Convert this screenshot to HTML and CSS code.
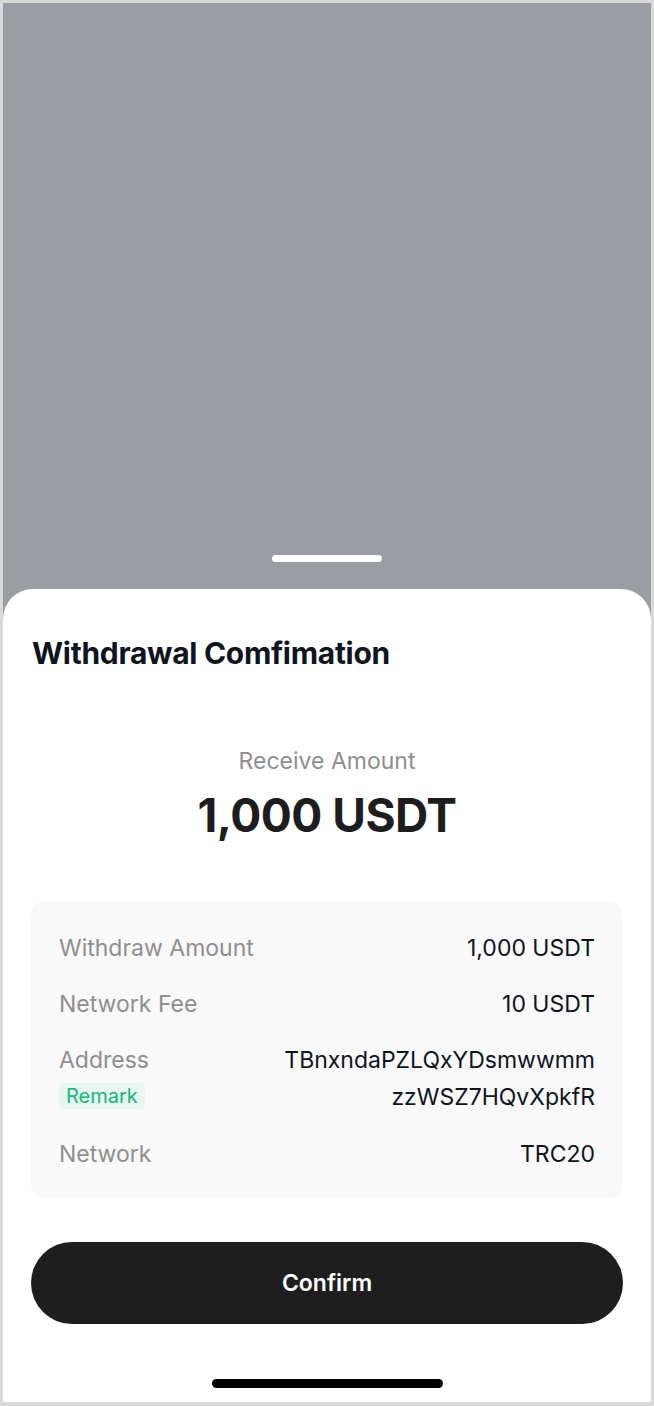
FILE: index.html
```html
<!DOCTYPE html>
<html lang="en">
<head>
    <meta charset="UTF-8">
    <meta name="viewport" content="width=device-width, initial-scale=1.0">
    <title>Withdrawal Confirmation</title>
    <link rel="stylesheet" href="styles.css">
</head>
<body>
    <div class="screen">
        <div class="overlay">
            <div class="handle"></div>
        </div>

        <div class="sheet">
            <h1 class="title">Withdrawal Comfimation</h1>

            <div class="receive">
                <p class="receive-label">Receive Amount</p>
                <p class="receive-value">1,000 USDT</p>
            </div>

            <div class="details">
                <div class="row">
                    <span class="label">Withdraw Amount</span>
                    <span class="value">1,000 USDT</span>
                </div>
                <div class="row">
                    <span class="label">Network Fee</span>
                    <span class="value">10 USDT</span>
                </div>
                <div class="row row-address">
                    <div class="address-left">
                        <span class="label">Address</span>
                        <span class="remark">Remark</span>
                    </div>
                    <span class="value address">TBnxndaPZLQxYDsmwwmm<br>zzWSZ7HQvXpkfR</span>
                </div>
                <div class="row">
                    <span class="label">Network</span>
                    <span class="value">TRC20</span>
                </div>
            </div>

            <button class="confirm">Confirm</button>

            <div class="home-indicator"></div>
        </div>
    </div>
</body>
</html>
```

FILE: styles.css
```css
* {
    box-sizing: border-box;
}
body {
    margin: 0;
    font-family: Inter, 'Noto Sans', sans-serif;
    background: #d9d9d9;
}
.screen {
    width: 654px;
    height: 1406px;
    border: 3px solid #d9d9d9;
    border-bottom-width: 4px;
    display: flex;
    flex-direction: column;
    background: #9a9da1;
}
.overlay {
    flex: 1;
    display: flex;
    align-items: flex-end;
    justify-content: center;
    padding-bottom: 27px;
}
.handle {
    width: 110px;
    height: 7px;
    border-radius: 4px;
    background: #fff;
}
.sheet {
    height: 813px;
    background: #fff;
    border-radius: 30px 30px 0 0;
    padding: 46px 28px 0;
    display: flex;
    flex-direction: column;
}
.title {
    margin: 0 0 0 1px;
    font-size: 30px;
    line-height: 36px;
    font-weight: 700;
    color: #0e1420;
    letter-spacing: -0.3px;
}
.receive {
    margin-top: 76px;
    text-align: center;
}
.receive-label {
    margin: 0;
    font-size: 23px;
    line-height: 28px;
    color: #8e8e8e;
}
.receive-value {
    margin: 13px 0 0;
    font-size: 46px;
    line-height: 54px;
    font-weight: 700;
    color: #1d1d1d;
    letter-spacing: -0.5px;
}
.details {
    margin-top: 59px;
    background: #f9f9f9;
    border-radius: 14px;
    padding: 33px 28px 30px;
    display: flex;
    flex-direction: column;
    gap: 28px;
}
.row {
    display: flex;
    justify-content: space-between;
    align-items: flex-start;
    font-size: 23px;
    line-height: 28px;
}
.label {
    color: #8e8e8e;
}
.value {
    color: #0e1420;
    text-align: right;
}
.address {
    line-height: 37px;
    margin: -4px 0;
}
.address-left {
    display: flex;
    flex-direction: column;
    align-items: flex-start;
    gap: 9px;
}
.remark {
    background: #e9f6f0;
    color: #12b87a;
    font-size: 20px;
    line-height: 26px;
    padding: 0 7px;
    border-radius: 5px;
}
.confirm {
    margin-top: 44px;
    height: 82px;
    border: none;
    border-radius: 41px;
    background: #1e1e1e;
    color: #fff;
    font-family: inherit;
    font-size: 23px;
    font-weight: 600;
    cursor: pointer;
}
.home-indicator {
    margin: 55px auto 0;
    width: 231px;
    height: 9px;
    border-radius: 5px;
    background: #000;
}
```
